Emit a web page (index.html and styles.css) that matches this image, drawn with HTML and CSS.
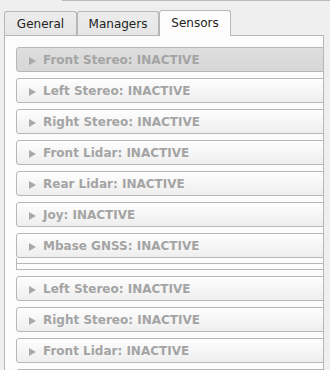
FILE: index.html
```html
<!DOCTYPE html>
<html lang="en">
<head>
    <meta charset="UTF-8">
    <meta name="viewport" content="width=device-width, initial-scale=1.0">
    <title>Sensors</title>
    <link rel="stylesheet" href="styles.css">
</head>
<body>
    <div class="top-line"></div>

    <nav class="tabs">
        <div class="tab tab-general">General</div>
        <div class="tab tab-managers">Managers</div>
        <div class="tab tab-sensors active">Sensors</div>
    </nav>

    <main class="panel">
        <div class="sensor selected"><span class="arrow"></span>Front Stereo: INACTIVE</div>
        <div class="sensor"><span class="arrow"></span>Left Stereo: INACTIVE</div>
        <div class="sensor"><span class="arrow"></span>Right Stereo: INACTIVE</div>
        <div class="sensor"><span class="arrow"></span>Front Lidar: INACTIVE</div>
        <div class="sensor"><span class="arrow"></span>Rear Lidar: INACTIVE</div>
        <div class="sensor"><span class="arrow"></span>Joy: INACTIVE</div>
        <div class="sensor last"><span class="arrow"></span>Mbase GNSS: INACTIVE</div>
        <div class="tail">
            <div class="tail-inner"></div>
        </div>

        <div class="sensor"><span class="arrow"></span>Left Stereo: INACTIVE</div>
        <div class="sensor"><span class="arrow"></span>Right Stereo: INACTIVE</div>
        <div class="sensor"><span class="arrow"></span>Front Lidar: INACTIVE</div>
        <div class="sensor"></div>
    </main>
</body>
</html>
```

FILE: styles.css
```css
:root {
    --bg-color: #efefef;
    --panel-color: #fcfcfc;
    --border-color: #b7b7b7;
    --text-color: #222222;
    --muted-color: #a4a4a4;
}

* {
    margin: 0;
    padding: 0;
    box-sizing: border-box;
}

html, body {
    height: 100%;
    overflow: hidden;
}

body {
    font-family: 'DejaVu Sans', Verdana, sans-serif;
    font-size: 12px;
    background-color: var(--bg-color);
    color: var(--text-color);
}

.top-line {
    height: 1px;
    margin-left: 62px;
    background-color: #bcbcbc;
}

.tabs {
    display: flex;
    align-items: flex-end;
    height: 25px;
    margin: 9px 0 0 4px;
}

.tab {
    height: 24px;
    padding-top: 2px;
    line-height: 21px;
    text-align: center;
    background: linear-gradient(#ececec, #e6e6e6);
    border: 1px solid var(--border-color);
    border-bottom: none;
    border-radius: 3px 3px 0 0;
}

.tab-general {
    width: 73px;
}

.tab-managers {
    width: 82px;
}

.tab-sensors {
    width: 72px;
}

.tab.active {
    position: relative;
    height: 26px;
    margin-bottom: -1px;
    background: var(--panel-color);
}

.panel {
    width: 320px;
    height: 420px;
    margin-left: 4px;
    padding: 11px 0 0 11px;
    background-color: var(--panel-color);
    border: 1px solid var(--border-color);
    overflow: hidden;
}

.sensor {
    height: 25px;
    margin: 0 -14px 6px 0;
    padding: 1px 0 0 12px;
    line-height: 22px;
    font-weight: bold;
    color: var(--muted-color);
    white-space: nowrap;
    background: linear-gradient(#fefefe, #eeeeee);
    border: 1px solid var(--border-color);
    border-radius: 3px;
}

.sensor.selected {
    background: linear-gradient(#dedede, #d7d7d7);
}

.sensor.last {
    margin-bottom: 0;
}

.arrow {
    display: inline-block;
    width: 0;
    height: 0;
    margin-right: 7px;
    vertical-align: -1px;
    border-top: 4px solid transparent;
    border-bottom: 4px solid transparent;
    border-left: 7px solid #a9a9a9;
}

.tail {
    margin: 0 -14px 6px 0;
    padding-top: 5px;
    border-left: 1px solid var(--border-color);
    border-bottom: 1px solid var(--border-color);
}

.tail-inner {
    height: 6px;
    border-top: 1px solid var(--border-color);
}
```
